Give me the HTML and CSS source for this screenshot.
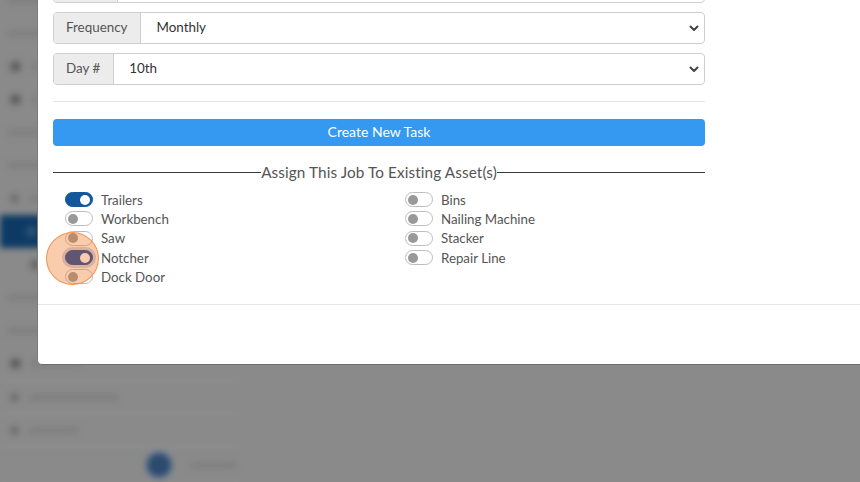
FILE: index.html
```html
<!DOCTYPE html>
<html>
<head>
<meta charset="utf-8">
<link rel="stylesheet" href="styles.css">
</head>
<body>
<div class="page">
  <aside class="sidebar">
    <div class="side-row"><span class="bar w40"></span></div>
    <div class="side-row"><span class="bar w30"></span></div>
    <div class="side-row"><span class="ico"></span><span class="bar w50"></span></div>
    <div class="side-row"><span class="ico"></span><span class="bar w40"></span></div>
    <div class="side-row"><span class="bar w40"></span></div>
    <div class="side-row"><span class="bar w30"></span></div>
    <div class="side-row"><span class="ico small"></span><span class="bar w30"></span></div>
    <div class="side-row active"><span class="ico light"></span></div>
    <div class="side-row"><span class="ico sub"></span><span class="bar w30"></span></div>
    <div class="side-row"><span class="bar w40"></span></div>
    <div class="side-row"><span class="bar w40"></span></div>
    <div class="side-row"><span class="ico"></span><span class="bar w30"></span></div>
    <div class="side-row sep"><span class="ico small"></span><span class="bar w80"></span></div>
    <div class="side-row sep"><span class="ico small"></span><span class="bar w30"></span></div>
    <div class="side-row sep end"><span class="knob-blur"></span><span class="bar w20"></span></div>
  </aside>
</div>

<div class="modal">
  <div class="modal-body">
    <form class="task-form">
      <div class="input-group ta-group">
        <span class="ig-label ta-label"></span>
        <div class="ig-field ta-field">
          <svg class="grip" width="8" height="8" viewBox="0 0 8 8"><path d="M7 2 L2 7 M7 5 L5 7" stroke="#888" stroke-width="1" fill="none"/></svg>
        </div>
      </div>
      <div class="input-group">
        <span class="ig-label">Frequency</span>
        <div class="ig-field select"><span>Monthly</span>
          <svg class="chev" width="10" height="7" viewBox="0 0 10 7"><path d="M1.5 1.5 L5 5 L8.5 1.5" stroke="#444" stroke-width="2" fill="none" stroke-linecap="round" stroke-linejoin="round"/></svg>
        </div>
      </div>
      <div class="input-group">
        <span class="ig-label">Day #</span>
        <div class="ig-field select"><span>10th</span>
          <svg class="chev" width="10" height="7" viewBox="0 0 10 7"><path d="M1.5 1.5 L5 5 L8.5 1.5" stroke="#444" stroke-width="2" fill="none" stroke-linecap="round" stroke-linejoin="round"/></svg>
        </div>
      </div>
      <hr class="rule">
      <button type="button" class="btn-primary">Create New Task</button>
      <div class="divider"><span class="line"></span><span class="divider-text">Assign This Job To Existing Asset(s)</span><span class="line"></span></div>
      <div class="switch-grid">
        <div class="switch-col">
          <label class="switch-row"><span class="switch on"></span><span>Trailers</span></label>
          <label class="switch-row"><span class="switch"></span><span>Workbench</span></label>
          <label class="switch-row"><span class="switch"></span><span>Saw</span></label>
          <label class="switch-row"><span class="switch on focus"></span><span>Notcher</span></label>
          <label class="switch-row"><span class="switch"></span><span>Dock Door</span></label>
        </div>
        <div class="switch-col">
          <label class="switch-row"><span class="switch"></span><span>Bins</span></label>
          <label class="switch-row"><span class="switch"></span><span>Nailing Machine</span></label>
          <label class="switch-row"><span class="switch"></span><span>Stacker</span></label>
          <label class="switch-row"><span class="switch"></span><span>Repair Line</span></label>
        </div>
      </div>
    </form>
  </div>
  <div class="modal-footer"></div>
</div>

<div class="click-ring"></div>
</body>
</html>
```

FILE: styles.css
```css
* { box-sizing: border-box; }
html, body {
  margin: 0;
  padding: 0;
  width: 860px;
  height: 482px;
  overflow: hidden;
}
body {
  background: #8a8a8a;
  font-family: Lato, "Open Sans", sans-serif;
  font-size: 13px;
  color: #555;
  position: relative;
}

/* blurred background page */
.page {
  display: flex;
  height: 482px;
}
.sidebar {
  width: 240px;
  display: flex;
  flex-direction: column;
  filter: blur(3px);
  margin-top: -16px;
}
.side-row {
  height: 33px;
  display: flex;
  align-items: center;
  gap: 10px;
  padding-left: 8px;
  flex: none;
}
.side-row.active {
  background: #0d3a64;
}
.side-row.sep {
  border-top: 1px solid #9c9c9c;
}
.side-row.end {
  border-bottom: 1px solid #9c9c9c;
  justify-content: flex-end;
  padding-right: 4px;
  height: 38px;
}
.bar {
  height: 5px;
  background: #7c7c7c;
  border-radius: 2px;
}
.w20 { width: 45px; }
.w30 { width: 50px; }
.w40 { width: 70px; }
.w50 { width: 80px; }
.w80 { width: 90px; }
.ico {
  width: 11px;
  height: 11px;
  border-radius: 50%;
  background: #5e5e5e;
  margin-left: 2px;
}
.ico.small { width: 9px; height: 9px; background: #6c6c6c; }
.ico.light { background: #2d5478; margin-left: 18px; }
.ico.sub { margin-left: 22px; background: #666; }
.knob-blur {
  width: 24px;
  height: 24px;
  border-radius: 50%;
  background: #2b4a6e;
  box-shadow: 0 0 0 3px rgba(110, 130, 160, 0.6);
  margin-right: 10px;
}

/* modal */
.modal {
  position: absolute;
  left: 37px;
  top: -50px;
  width: 880px;
  background: #fff;
  border-radius: 5px;
  border-bottom: 1px solid #6e6e6e;
  border-left: 1px solid #7a7a7a;
}
.modal-body {
  padding: 16px 15px 18px 15px;
}
.task-form {
  width: 652px;
}
.input-group {
  display: flex;
  height: 32px;
  margin-bottom: 9px;
  border: 1px solid #cfcfcf;
  border-radius: 4px;
  overflow: hidden;
}
.ta-group { height: 37px; }
.ig-label {
  background: #ececec;
  border-right: 1px solid #cfcfcf;
  padding: 0 13px 2px 12px;
  display: flex;
  align-items: center;
  color: #555;
  font-size: 13.4px;
}
.ta-label { width: 64px; }
.ig-field {
  flex: 1;
  display: flex;
  align-items: center;
  justify-content: space-between;
  padding: 0 5px 2px 15px;
  color: #333;
  font-size: 13.4px;
}
.ta-field {
  align-items: flex-end;
  justify-content: flex-end;
  padding: 0 1px 1px 0;
}
.grip { display: block; }
.chev { display: block; margin-top: 3px; }
.rule {
  border: 0;
  border-top: 1px solid #e6e6e6;
  margin: 16px 0 17px;
}
.btn-primary {
  display: block;
  width: 100%;
  height: 27px;
  border: 0;
  border-radius: 4px;
  background: #3598f1;
  color: #fff;
  font-family: inherit;
  font-size: 14px;
  padding: 0 0 3px;
}
.divider {
  display: flex;
  align-items: center;
  margin-top: 16px;
  height: 20px;
}
.divider .line {
  flex: 1;
  height: 1px;
  background: #3a3a3a;
}
.divider-text {
  font-size: 15.3px;
  color: #555;
  letter-spacing: 0.1px;
  line-height: 20px;
  padding-bottom: 1px;
}
.switch-grid {
  display: grid;
  grid-template-columns: 340px 1fr;
  padding-left: 12px;
  margin-top: 8px;
}
.switch-col {
  display: flex;
  flex-direction: column;
}
.switch-row {
  display: flex;
  align-items: center;
  gap: 8px;
  height: 19.3px;
  color: #555;
  font-size: 13.3px;
}
.switch {
  width: 28px;
  height: 15px;
  border: 1px solid #bdbdbd;
  border-radius: 8px;
  background: #fff;
  position: relative;
  flex: none;
}
.switch::after {
  content: "";
  position: absolute;
  left: 2px;
  top: 1.5px;
  width: 10px;
  height: 10px;
  border-radius: 50%;
  background: #999;
}
.switch.on {
  background: #11579c;
  border-color: #11579c;
}
.switch.on::after {
  left: auto;
  right: 2px;
  background: #fff;
}
.switch.focus {
  background: #0a3fa0;
  border-color: #0a3fa0;
  box-shadow: 0 0 0 3px rgba(140, 160, 200, 0.45);
}

.modal-footer {
  height: 60px;
  border-top: 1px solid #e5e5e5;
}

/* click highlight overlay */
.click-ring {
  position: absolute;
  left: 46px;
  top: 232px;
  width: 53px;
  height: 53px;
  border-radius: 50%;
  background: rgba(240, 120, 40, 0.38);
  border: 1.5px solid rgba(240, 140, 70, 0.85);
}
```
